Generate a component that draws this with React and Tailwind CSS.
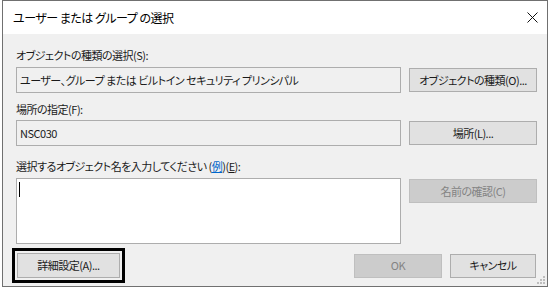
import React from 'react';

const font = "[font-family:'Noto_Sans_CJK_JP','Noto_Sans',sans-serif] [font-feature-settings:'palt'] tracking-[-0.5px]";

const Button = ({ children, disabled, className = '' }) => (
  <div
    className={`flex items-center justify-center border text-[11px] leading-none ${
      disabled
        ? 'bg-[#cccccc] border-[#bfbfbf] text-[#838383]'
        : 'bg-[#e1e1e1] border-[#adadad] text-[#1a1a1a]'
    } ${className}`}
  >
    {children}
  </div>
);

const Field = ({ children }) => (
  <div className="w-[385px] h-[26px] border border-[#adadad] bg-[#f0f0f0] flex items-center pl-[3px] text-[11px] text-[#1a1a1a]">
    {children}
  </div>
);

export default function App() {
  return (
    <div className={`w-[551px] h-[291px] bg-white ${font}`}>
      <div className="ml-[2px] w-[546px] h-[287px] border border-[#707070] flex flex-col">
        {/* title bar */}
        <div className="h-[33px] bg-white flex items-center justify-between pl-[10px] pr-[9px]">
          <span className="text-[12px] text-black">ユーザー または グループ の選択</span>
          <svg width="11" height="11" viewBox="0 0 11 11">
            <path d="M0.5 0.5 L10.5 10.5 M10.5 0.5 L0.5 10.5" stroke="#111" strokeWidth="1" />
          </svg>
        </div>

        {/* body */}
        <div className="flex-1 bg-[#f0f0f0] pl-[13px] pr-[9px] pt-[13px] relative">
          <div className="text-[11px] text-[#1a1a1a] leading-[16px]">オブジェクトの種類の選択(S):</div>
          <div className="flex items-center gap-[8px] mt-[4px]">
            <Field>ユーザー、グループ または ビルトイン セキュリティ プリンシパル</Field>
            <Button className="w-[128px] h-[24px]">オブジェクトの種類(O)...</Button>
          </div>

          <div className="text-[11px] text-[#1a1a1a] leading-[16px] mt-[8px]">場所の指定(F):</div>
          <div className="flex items-center gap-[8px] mt-[3px]">
            <Field>NSC030</Field>
            <Button className="w-[128px] h-[24px]">場所(L)...</Button>
          </div>

          <div className="text-[11px] text-[#1a1a1a] leading-[16px] mt-[12px]">
            選択するオブジェクト名を入力してください (<span className="text-[#0066cc] underline">例</span>)(<span className="underline">E</span>):
          </div>
          <div className="flex items-start gap-[8px] mt-[4px]">
            <div className="w-[385px] h-[66px] border border-[#adadad] bg-white pl-[2px] pt-[3px]">
              <div className="w-[1px] h-[15px] bg-black" />
            </div>
            <Button disabled className="w-[128px] h-[24px] mt-[1px]">名前の確認(C)</Button>
          </div>

          <div className="flex items-center mt-[4px] -ml-[4px]">
            <div className="border-[3px] border-black p-[1px] bg-[#f0f0f0]">
              <div className="border border-[#f0f0f0]">
                <Button className="w-[103px] h-[25px]">詳細設定(A)...</Button>
              </div>
            </div>
            <div className="flex-1" />
            <Button disabled className="w-[88px] h-[24px]">OK</Button>
            <Button className="w-[86px] h-[24px] ml-[8px] mr-[2px]">キャンセル</Button>
          </div>

          {/* size grip */}
          <svg className="absolute right-[1px] bottom-[1px]" width="10" height="10" viewBox="0 0 10 10">
            <g fill="#bdbdbd">
              <rect x="7" y="1" width="2" height="2" />
              <rect x="4" y="4" width="2" height="2" />
              <rect x="7" y="4" width="2" height="2" />
              <rect x="1" y="7" width="2" height="2" />
              <rect x="4" y="7" width="2" height="2" />
              <rect x="7" y="7" width="2" height="2" />
            </g>
          </svg>
        </div>
      </div>
    </div>
  );
}
